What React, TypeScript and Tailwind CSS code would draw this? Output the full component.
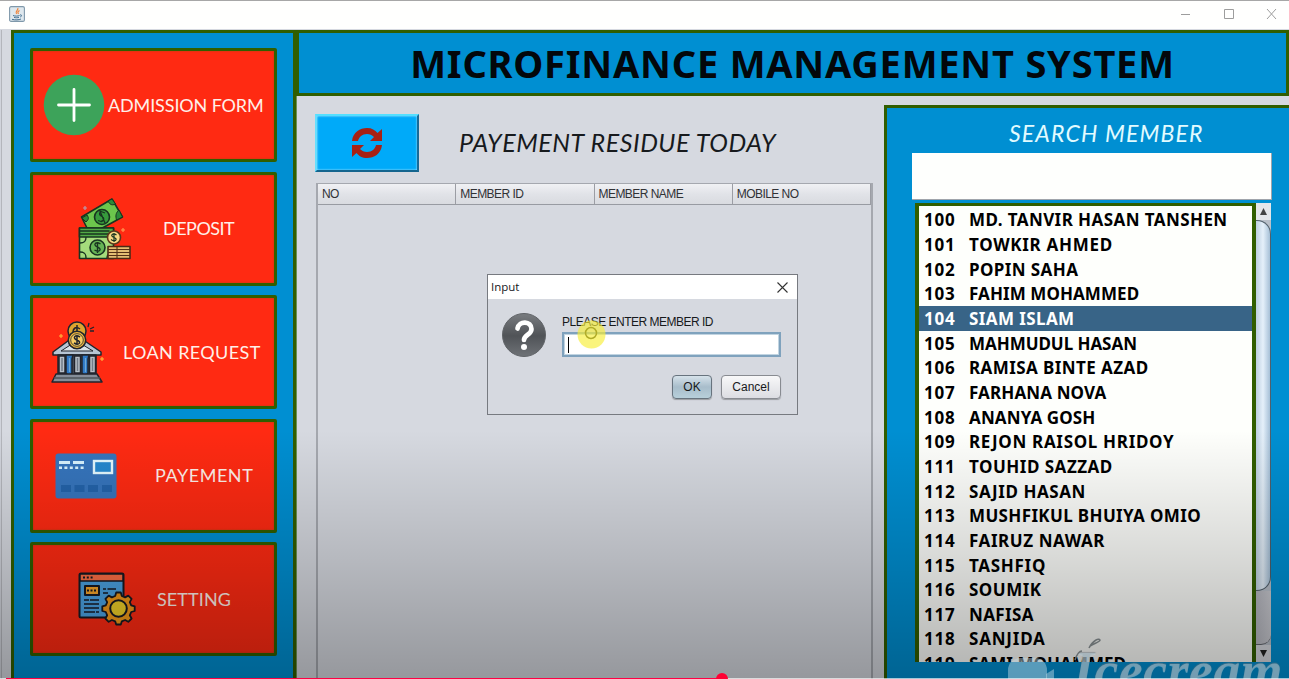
import type { ReactNode } from 'react';

const members: [number, string, string][] = [
  [100, 'MD. TANVIR HASAN TANSHEN', 'tracking-[0.420px]'],
  [101, 'TOWKIR AHMED', 'tracking-[0.700px]'],
  [102, 'POPIN SAHA', 'tracking-[0.400px]'],
  [103, 'FAHIM MOHAMMED', 'tracking-[0.080px]'],
  [104, 'SIAM ISLAM', 'tracking-[0.400px]'],
  [105, 'MAHMUDUL HASAN', 'tracking-[-0.050px]'],
  [106, 'RAMISA BINTE AZAD', 'tracking-[0.420px]'],
  [107, 'FARHANA NOVA', 'tracking-[0.120px]'],
  [108, 'ANANYA GOSH', 'tracking-[0.120px]'],
  [109, 'REJON RAISOL HRIDOY', 'tracking-[0.680px]'],
  [111, 'TOUHID SAZZAD', 'tracking-[0.500px]'],
  [112, 'SAJID HASAN', 'tracking-[0.550px]'],
  [113, 'MUSHFIKUL BHUIYA OMIO', 'tracking-[0.360px]'],
  [114, 'FAIRUZ NAWAR', 'tracking-[0.570px]'],
  [115, 'TASHFIQ', 'tracking-[0.700px]'],
  [116, 'SOUMIK', 'tracking-[0.500px]'],
  [117, 'NAFISA', 'tracking-[0.350px]'],
  [118, 'SANJIDA', 'tracking-[0.800px]'],
  [119, 'SAMI MOHAMMED', 'tracking-[0.050px]'],
];

const selectedId = 104;

function JavaIcon() {
  return (
    <svg width="16" height="16" viewBox="0 0 16 16" fill="none" className="relative -top-px">
      <rect x=".6" y=".6" width="14.8" height="14.8" rx="1.5" fill="#dfe8ee" stroke="#7f98aa" strokeWidth="1.1" />
      <path d="M8.8 2c1.200 2-3.300 3-1.300 6M10.500 4.500c-2 1.200-2 2-1 3.500" stroke="#ef843a" strokeWidth="1.200" />
      <path d="M4 9.500c2 .8 5 .8 6.500 0M5 11.300c2 .6 3.500.6 5 0M3 13.300c3 .9 7 .7 9-.3M11 9c2-.8 2 1.500.3 2" stroke="#426f91" strokeWidth="1" />
    </svg>
  );
}

function PlusIcon() {
  return (
    <svg width="62" height="62" viewBox="0 0 62 62" className="shrink-0">
      <circle cx="31" cy="31" r="30.300" fill="#3da35a" />
      <path d="M31 15.500v31M15.500 31h31" stroke="#fff" strokeWidth="2.800" strokeLinecap="round" />
    </svg>
  );
}

function MoneyIcon() {
  return (
    <svg width="54" height="63" viewBox="0 0 54 63" stroke="#183420" strokeWidth="1.600" strokeLinejoin="round" className="shrink-0">
      <path d="M9 31 3.500 20 34 2l10.500 18-22 12z" fill="#6cc64c" />
      <path d="m4 21 5-3c2 3 2 4-1 7zM30 4l4-2 3.500 5c-4 2-6 0-7.500-3zM41 13l3.500 7-6 3c-1-4-1-7 2.500-10z" fill="#2b8b38" strokeWidth="1" />
      <circle cx="24" cy="20" r="7.500" fill="#369a3c" />
      <path d="m27 16-4-1.500c-3 2-1 4 1 5s3 4-1 5l-3-1M21.500 13l5.500 13" fill="none" strokeWidth="1.300" />
      <rect x="1.500" y="31" width="34" height="30.500" fill="#a5dc7c" />
      <path d="M1.500 31h34v9h-34z" fill="#52aa46" />
      <path d="M1.500 34h30M1.500 37h30" strokeWidth="1.300" />
      <path d="M2 46c5 0 6-2 6-6M2 55c5 0 6 2 6 6M29 61c0-4 2-5 5-6" fill="none" strokeWidth="1.400" />
      <circle cx="19.500" cy="50.500" r="7.500" fill="#66b455" />
      <path d="M22.500 47c-5-3-8 1-3 3s2 6-3 3M19.500 45v11" fill="none" strokeWidth="1.400" />
      <circle cx="36" cy="40.500" r="6.500" fill="#f8d985" stroke="#5b3a1c" />
      <path d="M38.500 38c-4-3-7 1-2.500 2.500s1 5-3 2M36 36v9" fill="none" strokeWidth="1.200" />
      <path d="M30 49.500h22v12H30z" fill="#e4bd72" stroke="#4a2b16" />
      <path d="M30 52.500h22M30 55.500h22M30 58.500h22M39 49.500v12" stroke="#553017" strokeWidth="1.100" />
      <path d="M7 9v4M5 11h4" stroke="#b79cb0" strokeWidth="1.200" />
      <path d="M45 31v4M43 33h4" stroke="#ff9f53" strokeWidth="1.100" />
    </svg>
  );
}

function BankIcon() {
  return (
    <svg width="54" height="64" viewBox="0 0 54 64" stroke="#21242d" strokeWidth="1.500" strokeLinejoin="round" className="shrink-0">
      <path d="m2 32 23-17 25 17v3H2z" fill="#b7c5d4" />
      <path d="m10 31 15.500-10L42 31z" fill="#dbe3ea" strokeWidth="1" />
      <circle cx="26" cy="11" r="9" fill="#dda52f" />
      <path d="M22 13c0-5 3-7 7-4M26 5v8" fill="none" />
      <circle cx="26" cy="20" r="8.700" fill="#f1b83d" />
      <circle cx="26" cy="20" r="6.300" fill="#f7cc63" strokeWidth=".8" />
      <path d="M29 17c-5-3-8 1-3 3s2 6-3 3M26 15v10" fill="none" strokeWidth="1.500" />
      <path d="M7 35h38v21H7z" fill="#48515e" />
      <path d="M8 36h6v17H8zm15.500 0h6v17h-6zM38.500 36h6v17h-6z" fill="#b8c0c9" />
      <path d="M11 38v13M26.500 38v13M41.500 38v13" stroke="#727c88" />
      <path d="M15 35h7l-1 4v14l-3 4-3-4zm16 0h7l-1 4v14l-3 4-3-4z" fill="#2f78c4" />
      <path d="M18.500 38v14M34.500 38v14" stroke="#6ba9d8" strokeWidth="1.200" />
      <path d="M5 54h41l5 8H1z" fill="#858e99" />
      <path d="M3 58h46" stroke="#4e535a" />
      <path d="m37 7 1-4M39 9l4-2M39 11h4" strokeWidth="1.300" />
      <path d="M10 14v4M8 16h4M51 37v4M49 39h4" stroke="#ffb83c" strokeWidth="1.100" />
    </svg>
  );
}

function CardIcon() {
  return (
    <svg width="62" height="46" viewBox="0 0 62 46" className="shrink-0">
      <rect x=".5" y=".5" width="61" height="45" rx="3" fill="#3675bd" />
      <path d="M4 9.500h11m3 0h11" stroke="#d8f3ff" strokeWidth="3" />
      <path d="M4 14.800h25" stroke="#d8f3ff" strokeWidth="2.500" strokeDasharray="3 2.400" />
      <rect x="39" y="8" width="18" height="12" fill="#2688cf" stroke="#e4f8ff" strokeWidth="2.400" />
      <path d="M6 32h10v7H6zm13.500 0h10v7h-10zM33 32h10v7H33zm14 0h10v7H47z" fill="#2363aa" />
    </svg>
  );
}

function SettingIcon() {
  return (
    <svg width="58" height="54" viewBox="0 0 58 54" stroke="#171a23" strokeLinejoin="round" className="shrink-0">
      <rect x="1.500" y="1.500" width="44" height="44" rx="1.500" fill="#4ba3e4" strokeWidth="2" />
      <path d="M2 2h43v7H2z" fill="#ff6f45" strokeWidth="1.500" />
      <path d="M5 5.500h11" strokeWidth="2.200" strokeDasharray="2 1.800" />
      <rect x="7" y="14" width="14" height="9" fill="#f8a529" strokeWidth="2" />
      <path d="M9 18.500h10" strokeWidth="2" strokeDasharray="2 1.500" />
      <path d="M25 17h3m1.500 0H38M25 21h5M6 28h5m1 0h9M6 32h15M6 36h15M6 40h11m1 0h3" strokeWidth="1.700" />
      <path d="m37.200 24 1-3.500h4.600l1 3.500 3.300 1.400 3.200-1.800 3.300 3.300-1.800 3.200 1.400 3.300 3.500 1v4.600l-3.500 1-1.400 3.300 1.800 3.200-3.300 3.300-3.200-1.800-3.300 1.400-1 3.100h-4.600l-1-3.100-3.300-1.400-3.200 1.800-3.300-3.300 1.800-3.200-1.400-3.300-3.500-1v-4.600l3.500-1 1.400-3.300-1.800-3.200 3.300-3.300 3.200 1.800z" fill="#f49a19" strokeWidth="1.800" />
      <circle cx="40.500" cy="36.500" r="8.300" fill="#f0d028" strokeWidth="2" />
    </svg>
  );
}

function NavButton({ icon, pad, label, textPad, spacing }: { icon: ReactNode; pad: string; label: string; textPad: string; spacing: string }) {
  return (
    <button className="flex h-[114px] w-[247px] shrink-0 items-center rounded-[2px] border-[3px] border-[#315e00] bg-[#ff2a12] text-left shadow-[inset_0_0_2px_#a84410]">
      <span className={pad}>{icon}</span>
      <span className={`whitespace-nowrap pb-px font-['Lato'] text-[18px] leading-none text-[#fff0e9] ${textPad} ${spacing}`}>{label}</span>
    </button>
  );
}

function Sidebar() {
  return (
    <aside className="flex w-[285px] shrink-0 flex-col gap-[9.500px] border-x-[3px] border-t-[3px] border-[#315e00] bg-[#008fd2] pl-[16px] pt-[15px]">
      <NavButton icon={<PlusIcon />} pad="ml-[10px]" label="ADMISSION FORM" textPad="ml-[3px]" spacing="tracking-[-0.130px]" />
      <NavButton icon={<MoneyIcon />} pad="ml-[45px]" label="DEPOSIT" textPad="ml-[31px]" spacing="tracking-[-0.500px]" />
      <NavButton icon={<BankIcon />} pad="ml-[18px]" label="LOAN REQUEST" textPad="ml-[18px]" spacing="tracking-[0.380px]" />
      <NavButton icon={<CardIcon />} pad="ml-[22px]" label="PAYEMENT" textPad="ml-[38px]" spacing="tracking-[0.550px]" />
      <NavButton icon={<SettingIcon />} pad="ml-[45px]" label="SETTING" textPad="ml-[21px]" spacing="tracking-[0.100px]" />
    </aside>
  );
}

function ResidueTable() {
  return (
    <div className="mt-[11px] ml-[19px] flex w-[557px] flex-1 flex-col border-x-2 border-t border-[#a5a8af]">
      <div className="grid h-[21px] shrink-0 grid-cols-4 border-b border-[#989ba2] bg-linear-to-b from-[#f0f1f4] via-[#e1e3e8] to-[#d9dbe0] font-['Liberation_Sans'] text-[12px] leading-[20px] tracking-[-0.550px] text-[#303236]">
        {['NO', 'MEMBER ID', 'MEMBER NAME', 'MOBILE NO'].map((name) => (
          <div key={name} className="border-r border-[#9b9da4] pl-[4px]">{name}</div>
        ))}
      </div>
    </div>
  );
}

function MemberPanel() {
  return (
    <section className="mt-[9px] flex w-[405px] shrink-0 flex-col overflow-hidden border-l-[3px] border-t-[3px] border-[#315e00] bg-[#008fd2] pl-[25px]">
      <h2 className="mt-[13px] ml-[97px] h-[32px] whitespace-nowrap font-['Lato'] text-[23px] font-normal italic leading-[24px] tracking-[1.150px] text-[#e2fbff]">SEARCH MEMBER</h2>
      <input aria-label="Search member" className="h-[47px] w-[360px] border-b border-r border-[#a0a5ab] bg-[#fefffd] outline-none" />
      <div className="mt-[3px] ml-[3px] flex h-[459px] w-[356px] shrink-0 overflow-hidden">
        <div className="h-[480px] w-[341px] shrink-0 border-x-4 border-t-[3px] border-[#315e00] bg-[#fefffc] pt-[1.500px]">
          {members.map(([id, name, spacing]) => (
            <div key={id} className={`flex h-[24.670px] items-center whitespace-nowrap font-['Noto_Sans'] text-[17px] font-bold leading-none ${id === selectedId ? 'bg-[#386487] text-white' : 'text-black'}`}>
              <span className="ml-[5px] w-[45px] tracking-[0.800px]">{id}</span>
              <span className={spacing}>{name}</span>
            </div>
          ))}
        </div>
        <div className="flex w-[15px] flex-col bg-[#b9c0ca]">
          <div className="flex h-[17px] shrink-0 items-center justify-center bg-[#e4e6ea]">
            <svg width="7" height="7" viewBox="0 0 7 7"><path d="m3.500 0 3.500 7H0z" fill="#444" /></svg>
          </div>
          <div className="h-[371px] shrink-0 rounded-tr-[14px] rounded-br-[14px] border border-l-0 border-[#52606c] bg-linear-to-r from-[#bed0e1] via-[#e5f0fa] to-[#a6c0d7]" />
          <div className="flex-1 rounded-br-[10px] border-b border-[#62656c] bg-linear-to-r from-[#b6b7c0] to-[#cacbd1]" />
          <div className="flex h-[17px] items-center justify-center bg-[#d7d9df]">
            <svg width="7" height="7" viewBox="0 0 7 7"><path d="M0 0h7L3.500 7z" fill="#222" /></svg>
          </div>
        </div>
      </div>
    </section>
  );
}

function InputDialog() {
  return (
    <div role="dialog" aria-label="Input" className="absolute left-[487px] top-[274px] z-20 flex h-[141px] w-[311px] flex-col border border-[#777a80] bg-[#d6d9e0] font-['Liberation_Sans'] text-[12px] text-[#17191c]">
      <div className="flex h-[24px] shrink-0 items-center justify-between bg-white pl-[3px] pr-[9px]">
        <span className="font-['Open_Sans'] text-[11.500px]">Input</span>
        <svg width="11" height="11" viewBox="0 0 11 11" fill="none"><path d="m.5.5 10 10m0-10-10 10" stroke="#333" strokeWidth="1.100" /></svg>
      </div>
      <div className="flex">
        <svg width="46" height="46" viewBox="0 0 46 46" fill="none" className="mt-[13px] ml-[13px]">
          <defs><linearGradient id="question" x1="0" y1="0" x2="0" y2="1"><stop stopColor="#797c80" /><stop offset=".52" stopColor="#505357" /><stop offset="1" stopColor="#6e7277" /></linearGradient></defs>
          <circle cx="23" cy="23" r="21.500" fill="url(#question)" stroke="#606367" />
          <path d="M16.500 16.500c1.500-8.500 14-7.500 14 .5 0 6-7.500 5.500-7.500 11" stroke="#fff" strokeWidth="4.700" strokeLinecap="round" />
          <circle cx="23" cy="35" r="3" fill="#fff" />
        </svg>
        <div className="mt-[15px] ml-[15px]">
          <label className="block h-[18px] whitespace-nowrap leading-[16px] tracking-[-0.500px]">PLEASE ENTER MEMBER ID</label>
          <div className="flex h-[25px] w-[219px] items-center border-2 border-[#7fa2bd] bg-white pl-[4px] shadow-[inset_0_0_0_1px_#c1d4e1]">
            <div className="h-[16px] w-px bg-black" />
          </div>
        </div>
      </div>
      <div className="mt-[17px] flex justify-end gap-[9px] pr-[16px]">
        <button className="h-[24px] w-[40px] rounded-[4px] border border-[#67737e] bg-linear-to-b from-[#d6e2ea] via-[#a8bdcb] to-[#b7cfda] shadow-[0_1px_1px_#9a9ca0]">OK</button>
        <button className="h-[24px] w-[60px] rounded-[4px] border border-[#888b91] bg-linear-to-b from-[#f8f8f9] to-[#dcdde2] shadow-[0_1px_1px_#9a9ca0]">Cancel</button>
      </div>
      <svg width="30" height="30" viewBox="0 0 30 30" className="absolute left-[89px] top-[45px]" fill="none">
        <circle cx="14.500" cy="14.500" r="14" fill="#f7ee35" fillOpacity=".65" />
        <circle cx="14" cy="13" r="5.500" stroke="#b1ac28" strokeWidth="1.500" />
      </svg>
    </div>
  );
}

export default function App() {
  return (
    <div className="relative flex h-[679px] w-[1289px] flex-col overflow-hidden bg-[#d6d9e0]">
      <header className="flex h-[29px] shrink-0 items-center border-t border-[#a7a7a7] bg-[#fffffe] pl-[9px] pr-[12px]">
        <JavaIcon />
        <svg width="96" height="12" viewBox="0 0 96 12" className="relative -top-px ml-auto" fill="none" stroke="#9d9d9d" strokeWidth="1">
          <path d="M0 6.500h9M43.500 1.500h9v9h-9zM86 1l9 10m0-10-9 10" />
        </svg>
      </header>
      <div className="flex h-[650px] shrink-0 pt-px">
        <div className="mr-[9px] w-[2px] border-r border-[#b4b6bc] bg-[#d1d4dc]" />
        <Sidebar />
        <main className="flex min-w-0 flex-1 flex-col">
          <h1 className="flex h-[66px] shrink-0 items-center justify-center border-[3px] border-[#315e00] bg-[#008fd2] font-['Noto_Sans'] text-[38px] font-bold leading-none tracking-[0.780px] text-[#03070b]">MICROFINANCE MANAGEMENT SYSTEM</h1>
          <div className="flex min-h-0 flex-1">
            <section className="flex w-[588px] shrink-0 flex-col border-l border-[#6b9155]">
              <div className="mt-[18px] ml-[18px] flex h-[58px] items-center">
                <button aria-label="Refresh" className="flex h-[58px] w-[104px] items-center justify-center border-2 border-l-[#65dfff] border-t-[#54dfff] border-r-[#1b6a96] border-b-[#14658e] bg-[#00aaf9] shadow-[inset_0_0_2px_#d7f7ff]">
                  <svg width="32" height="32" viewBox="0 0 32 32" fill="#a82114">
                    <path d="M1 14C2 5 9 1 16 1c5 0 8 2 10.500 5L31 2v12H19l4-4c-2-2-4-3-7-3-5 0-8 3-9 7zM31 18c-1 9-8 13-15 13-5 0-8-2-10.500-5L1 30V18h12l-4 4c2 2 4 3 7 3 5 0 8-3 9-7z" />
                  </svg>
                </button>
                <h2 className="ml-[40px] whitespace-nowrap font-['Lato'] text-[25px] font-normal italic tracking-[0.550px] text-[#171a1d]">PAYEMENT RESIDUE TODAY</h2>
              </div>
              <ResidueTable />
            </section>
            <MemberPanel />
          </div>
        </main>
      </div>
      <InputDialog />
      <div className="pointer-events-none absolute inset-x-0 bottom-0 z-30 h-[249px] bg-linear-to-b from-transparent from-0% via-black/15 via-52% to-black/30 to-100%" />
      <div className="pointer-events-none absolute bottom-[-19px] right-[6px] z-40 flex items-center gap-[16px] text-[#c4dce6]/45">
        <svg width="49" height="34" viewBox="0 0 49 34" className="mt-[8px]"><rect width="39" height="34" rx="12" fill="currentColor" /><path d="m38 16 8-5v20l-8-7z" fill="currentColor" /></svg>
        <span className="font-['Liberation_Serif'] text-[54px] font-bold italic leading-none tracking-[0.400px] [text-shadow:0_-1px_1px_#66717a80]">Icecream</span>
        <svg width="30" height="26" viewBox="0 0 30 26" fill="none" className="absolute left-[66px] top-[-8px]">
          <path d="M1 24c2-6 5-9 7-9M15 12c4-8 10-10 11-8 0 2-5 3-10 6" stroke="#686e70" strokeWidth="1.500" />
        </svg>
      </div>
      <div className="absolute bottom-0 left-0 z-50 flex h-px w-full bg-white/65">
        <div className="ml-[6px] h-full w-[716px] bg-[#ff0044]" />
        <div className="-mt-[5px] -ml-[6px] h-[12px] w-[12px] shrink-0 rounded-full bg-[#ff0033]" />
      </div>
    </div>
  );
}
